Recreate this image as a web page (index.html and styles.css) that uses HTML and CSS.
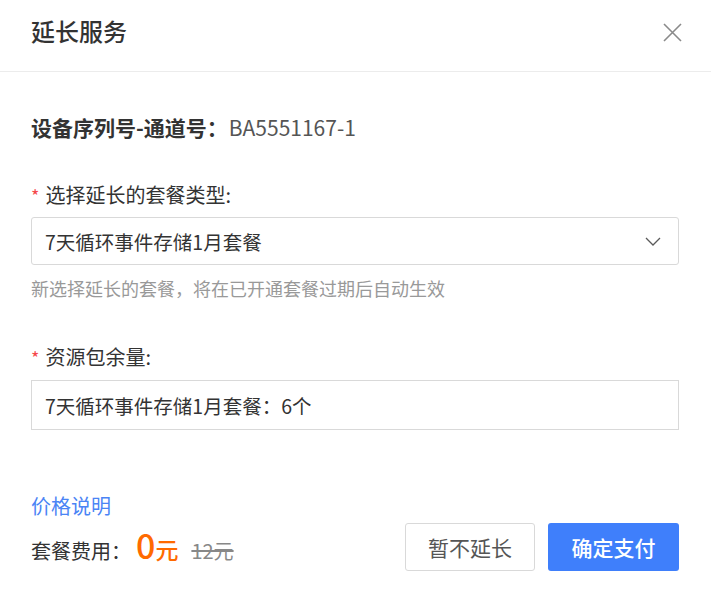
FILE: index.html
```html
<!DOCTYPE html>
<html lang="zh-CN">
<head>
<meta charset="utf-8">
<title>延长服务</title>
<link rel="stylesheet" href="styles.css">
</head>
<body>
<div class="dialog">
  <div class="header">
    <div class="title">延长服务</div>
    <div class="close" aria-label="关闭">
      <svg width="19" height="19" viewBox="0 0 19 19"><path d="M1 1 L18 18 M18 1 L1 18" stroke="#8a8a8a" stroke-width="1.6" fill="none"/></svg>
    </div>
  </div>
  <div class="body">
    <div class="serial"><span class="serial-label">设备序列号-通道号：</span><span class="serial-value">BA5551167-1</span></div>

    <div class="label label-first"><span class="req">*</span>选择延长的套餐类型:</div>
    <div class="select">
      <span class="select-text">7天循环事件存储1月套餐</span>
      <svg class="chev" width="16" height="9" viewBox="0 0 16 9"><path d="M1 1 L8 8 L15 1" stroke="#5a5a5a" stroke-width="1.3" fill="none"/></svg>
    </div>
    <div class="hint">新选择延长的套餐，将在已开通套餐过期后自动生效</div>

    <div class="label label-second"><span class="req">*</span>资源包余量:</div>
    <div class="input">7天循环事件存储1月套餐：6个</div>

    <div class="footer">
      <div class="price">
        <div class="price-link">价格说明</div>
        <div class="fee">
          <span class="fee-label">套餐费用：</span><span class="fee-num">0</span><span class="fee-unit">元</span><span class="fee-old">12元</span>
        </div>
      </div>
      <div class="actions">
        <div class="btn btn-default">暂不延长</div>
        <div class="btn btn-primary">确定支付</div>
      </div>
    </div>
  </div>
</div>
</body>
</html>
```

FILE: styles.css
```css
* { box-sizing: border-box; }
html, body { margin: 0; padding: 0; background: #fff; }
body {
  font-family: "Noto Sans CJK SC", "Noto Sans", sans-serif;
  color: #333;
  width: 711px;
  height: 591px;
  overflow: hidden;
}
.dialog { width: 711px; }
.header {
  height: 72px;
  border-bottom: 1px solid #ececec;
  display: flex;
  justify-content: space-between;
  align-items: flex-start;
  padding: 0 29px 0 31px;
}
.title {
  font-size: 24px;
  font-weight: 500;
  line-height: 30px;
  margin-top: 16px;
  color: #333;
}
.close {
  margin-top: 23px;
  width: 19px;
  height: 19px;
  display: flex;
}
.body {
  padding: 0 32px 0 31px;
}
.serial {
  margin-top: 41px;
  line-height: 28px;
  font-size: 21px;
}
.serial-label { font-weight: 700; color: #333; }
.serial-value { color: #555; margin-left: 1px; }
.label {
  font-size: 20px;
  line-height: 26px;
  color: #333;
}
.label-first { margin-top: 41px; }
.label-second { margin-top: 45px; }
.req {
  color: #f5484b;
  margin-right: 6px;
  font-size: 18px;
}
.select {
  margin-top: 9px;
  height: 48px;
  border: 1px solid #d9d9d9;
  border-radius: 3px;
  display: flex;
  align-items: center;
  justify-content: space-between;
  padding: 0 17px 0 13px;
}
.select-text { font-size: 19.5px; color: #333; }
.chev { display: block; }
.hint {
  margin-top: 12px;
  font-size: 18px;
  line-height: 22px;
  color: #999;
}
.input {
  margin-top: 10px;
  height: 50px;
  border: 1px solid #d9d9d9;
  display: flex;
  align-items: center;
  padding: 0 13px;
  font-size: 19.5px;
  color: #333;
}
.footer {
  margin-top: 63px;
  display: flex;
  justify-content: space-between;
  align-items: flex-start;
}
.price-link {
  font-size: 20px;
  line-height: 26px;
  color: #4a84f5;
}
.fee {
  margin-top: 6px;
  display: flex;
  align-items: baseline;
}
.fee-label { font-size: 20px; color: #333; }
.fee-num { font-size: 34px; color: #ff6a00; font-weight: 500; line-height: 40px; margin-left: 5px; }
.fee-unit { font-size: 23px; color: #ff6a00; font-weight: 500; }
.fee-old {
  font-size: 20px;
  color: #888;
  text-decoration: line-through;
  margin-left: 13px;
}
.actions {
  display: flex;
  gap: 13px;
  margin-top: 30px;
}
.btn {
  height: 48px;
  width: 131px;
  border-radius: 3px;
  display: flex;
  align-items: center;
  justify-content: center;
  font-size: 21px;
}
.btn-default {
  width: 130px;
  border: 1px solid #d9d9d9;
  color: #555;
  background: #fff;
}
.btn-primary {
  background: #3f7ffb;
  color: #fff;
  font-weight: 500;
}
```
